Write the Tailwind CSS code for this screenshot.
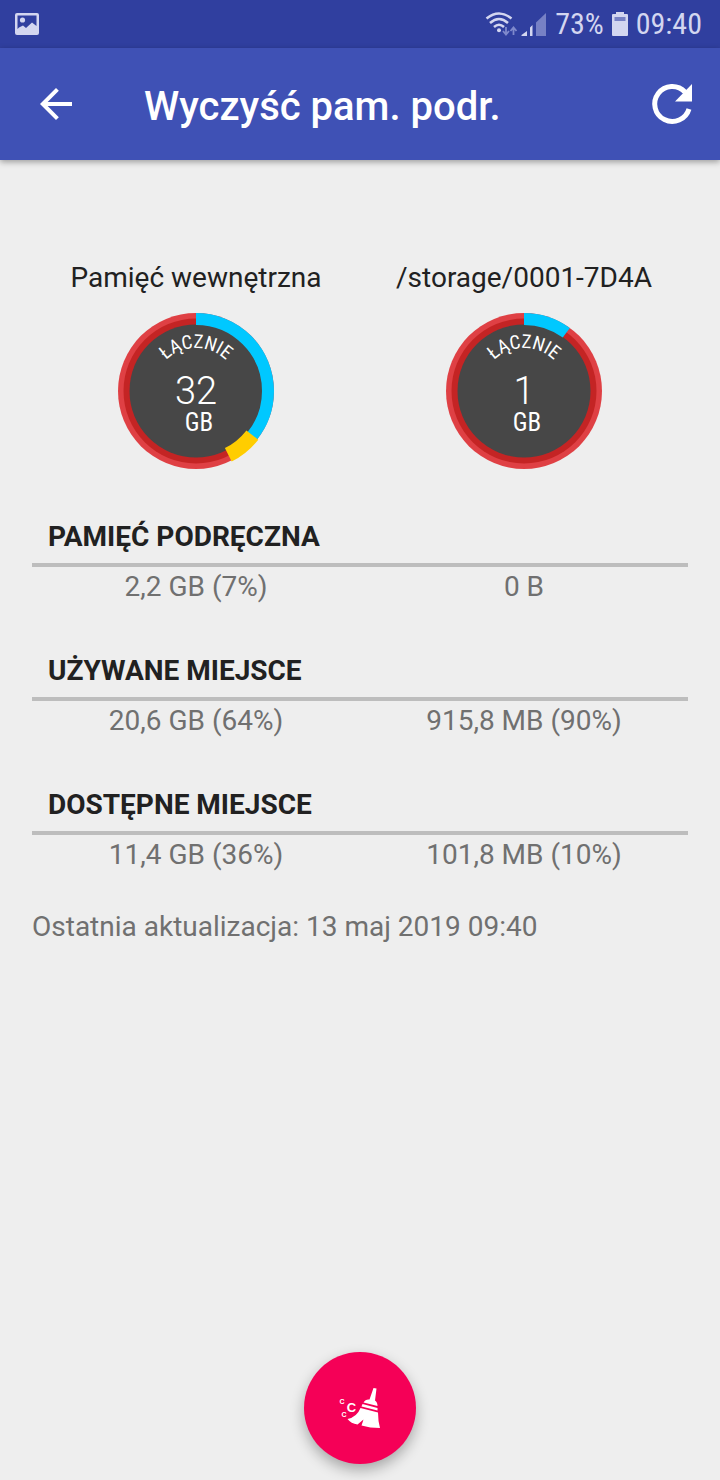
<!DOCTYPE html>
<html lang="pl">
<head>
<meta charset="utf-8">
<meta name="viewport" content="width=device-width, initial-scale=1">
<title>Wyczyść pam. podr.</title>
<script src="https://cdn.jsdelivr.net/npm/@tailwindcss/browser@4"></script>
</head>
<body class="flex min-h-screen flex-col bg-[#eeeeee] font-['Roboto',sans-serif] text-[28px] leading-8 text-[#707070]">

<!-- System status bar -->
<div class="flex h-12 items-center justify-between bg-[#303f9f] pr-[18px] pl-[15px] text-[#d3d6f0]">
  <svg class="h-[22px] w-6" viewBox="0 0 24 22" role="img" aria-label="Obraz">
    <path fill="currentColor" fill-rule="evenodd" d="M2 0H22Q24 0 24 2V20Q24 22 22 22H2Q0 22 0 20V2Q0 0 2 0ZM2.500 2.500V16L4 14.500L8 12.500L11 15L17 9.500L21.500 13V2.500Z"/>
    <circle cx="7.500" cy="7" r="2.600" fill="currentColor"/>
  </svg>
  <div class="flex items-center">
    <svg class="h-7 w-16" viewBox="0 0 64 28" role="img" aria-label="Wi-Fi i sieć komórkowa">
      <g fill="none" stroke="currentColor" stroke-width="2.500">
        <path d="M1.500 8.500Q14 -1.500 26.500 8.500"/>
        <path d="M5 13Q14 5 23 13"/>
        <path d="M9 17Q14 12.500 19 17"/>
      </g>
      <circle cx="14" cy="20.300" r="2" fill="currentColor"/>
      <g fill="none" stroke="#7f89cc" stroke-width="1.800">
        <path d="M21 17V24M18 21L21 24.500L24 21"/>
        <path d="M28.500 25V17.500M25.500 21L28.500 17.500L31.500 21"/>
      </g>
      <path fill="currentColor" d="M36.500 26V25L42 21V26ZM45 26V17.500L47.500 15V26Z"/>
      <path fill="#7781c5" d="M51 26V12.500L61 3V26Z"/>
    </svg>
    <span class="ml-1.5 font-['Roboto_Condensed','Roboto',sans-serif] text-[30px]">73%</span>
    <svg class="mx-2 h-6 w-4" viewBox="0 0 16 24" role="img" aria-label="Bateria 73%">
      <path fill="currentColor" d="M4 0H12V2H15Q16 2 16 3V23Q16 24 15 24H1Q0 24 0 23V3Q0 2 1 2H4Z"/>
      <path fill="#7781c5" d="M2.500 5H13.500V9H2.500Z"/>
    </svg>
    <span class="font-['Roboto_Condensed','Roboto',sans-serif] text-[30px]">09:40</span>
  </div>
</div>

<header class="flex h-28 items-center bg-[#3f51b5] pr-6 pl-8 text-white shadow-[0_2px_6px_rgba(0,0,0,0.35)]">
  <button type="button" aria-label="Wstecz" class="size-12">
    <svg class="size-12" viewBox="0 0 24 24" fill="currentColor"><path d="M20 11H7.830l5.590-5.590L12 4l-8 8 8 8 1.410-1.410L7.830 13H20v-2z"/></svg>
  </button>
  <h1 class="ml-16 flex-1 pt-1.5 text-[40px] leading-12 font-medium">Wyczyść pam. podr.</h1>
  <button type="button" aria-label="Odśwież" class="size-12">
    <svg class="size-12" viewBox="0 0 48 48">
      <path d="M41 29A17.500 17.500 0 1 1 37 12" fill="none" stroke="currentColor" stroke-width="5"/>
      <path d="M44 4V21.500H27Z" fill="currentColor"/>
    </svg>
  </button>
</header>

<main class="flex-1 px-8 pt-[102px]">
  <table class="w-full table-fixed text-center">
    <thead class="text-[#212121]">
      <tr>
        <th scope="col" class="font-normal">Pamięć wewnętrzna</th>
        <th scope="col" class="font-normal">/storage/0001-7D4A</th>
      </tr>
      <tr>
        <td class="pt-[17px] pb-[46px]">
          <svg class="mx-auto size-40 font-['Roboto_Condensed','Roboto',sans-serif]" viewBox="0 0 160 160" role="img" aria-label="Łącznie 32 GB">
            <circle cx="80" cy="80" r="78" fill="#df4044"/>
            <circle cx="80" cy="80" r="72.500" fill="#c42424"/>
            <circle cx="80" cy="80" r="66.500" fill="#474747"/>
            <circle cx="80" cy="80" r="72" fill="none" stroke="#00c8ff" stroke-width="12" pathLength="100" stroke-dasharray="36 64" transform="rotate(-90 80 80)"/>
            <circle cx="80" cy="80" r="71.500" fill="none" stroke="#ffcd00" stroke-width="15" pathLength="100" stroke-dasharray="7 93" transform="rotate(38 80 80)"/>
            <path id="arc-internal" d="M37 80A43 43 0 0 1 123 80" fill="none"/>
            <g fill="#fff" text-anchor="middle">
              <text font-size="19"><textPath href="#arc-internal" startOffset="50%">ŁĄCZNIE</textPath></text>
              <text x="80" y="93" class="font-['Roboto',sans-serif] font-light" font-size="38">32</text>
              <text x="83" y="120" font-size="25">GB</text>
            </g>
          </svg>
        </td>
        <td class="pt-[17px] pb-[46px]">
          <svg class="mx-auto size-40 font-['Roboto_Condensed','Roboto',sans-serif]" viewBox="0 0 160 160" role="img" aria-label="Łącznie 1 GB">
            <circle cx="80" cy="80" r="78" fill="#df4044"/>
            <circle cx="80" cy="80" r="72.500" fill="#c42424"/>
            <circle cx="80" cy="80" r="66.500" fill="#474747"/>
            <circle cx="80" cy="80" r="72" fill="none" stroke="#00c8ff" stroke-width="12" pathLength="100" stroke-dasharray="10 90" transform="rotate(-90 80 80)"/>
            <path id="arc-card" d="M37 80A43 43 0 0 1 123 80" fill="none"/>
            <g fill="#fff" text-anchor="middle">
              <text font-size="19"><textPath href="#arc-card" startOffset="50%">ŁĄCZNIE</textPath></text>
              <text x="80" y="93" class="font-['Roboto',sans-serif] font-light" font-size="38">1</text>
              <text x="83" y="120" font-size="25">GB</text>
            </g>
          </svg>
        </td>
      </tr>
    </thead>
    <tbody>
      <tr class="border-b-4 border-[#bdbdbd]">
        <th colspan="2" scope="colgroup" class="px-4 pb-1.5 text-left leading-10 font-bold text-[#212121]">PAMIĘĆ PODRĘCZNA</th>
      </tr>
      <tr><td class="pb-11 leading-10">2,2 GB (7%)</td><td class="pb-11 leading-10">0 B</td></tr>
    </tbody>
    <tbody>
      <tr class="border-b-4 border-[#bdbdbd]">
        <th colspan="2" scope="colgroup" class="px-4 pb-1.5 text-left leading-10 font-bold text-[#212121]">UŻYWANE MIEJSCE</th>
      </tr>
      <tr><td class="pb-11 leading-10">20,6 GB (64%)</td><td class="pb-11 leading-10">915,8 MB (90%)</td></tr>
    </tbody>
    <tbody>
      <tr class="border-b-4 border-[#bdbdbd]">
        <th colspan="2" scope="colgroup" class="px-4 pb-1.5 text-left leading-10 font-bold text-[#212121]">DOSTĘPNE MIEJSCE</th>
      </tr>
      <tr><td class="pb-9 leading-10">11,4 GB (36%)</td><td class="pb-9 leading-10">101,8 MB (10%)</td></tr>
    </tbody>
  </table>
  <p>Ostatnia aktualizacja: 13 maj 2019 09:40</p>
</main>

<footer class="flex justify-center pb-4">
  <button type="button" aria-label="Wyczyść pamięć podręczną" class="size-28 rounded-full bg-[#f50057] shadow-[0_6px_14px_rgba(0,0,0,0.3)]">
    <svg class="size-28" viewBox="0 0 112 112" fill="#fff">
      <path d="M69.500 36L72.500 36.500L71 48.500Q73.500 50 73.500 54L59.500 50.500Q61.500 47 65.500 47.500Z"/>
      <path d="M58.500 52L73.500 56V58.500L57.500 54.500Z"/>
      <path d="M56.500 56L74 60.500Q74 69 76 76Q66 76 57.500 73.500L59.500 67.500L53.500 72.500Q47 71.500 43.500 67Q53 65 56.500 56Z"/>
      <g font-family="Liberation Sans, sans-serif" font-weight="bold" text-anchor="middle">
        <text x="47.500" y="60" font-size="13">C</text>
        <text x="38" y="52" font-size="7">C</text>
        <text x="40" y="65" font-size="7">C</text>
      </g>
    </svg>
  </button>
</footer>
</body>
</html>
